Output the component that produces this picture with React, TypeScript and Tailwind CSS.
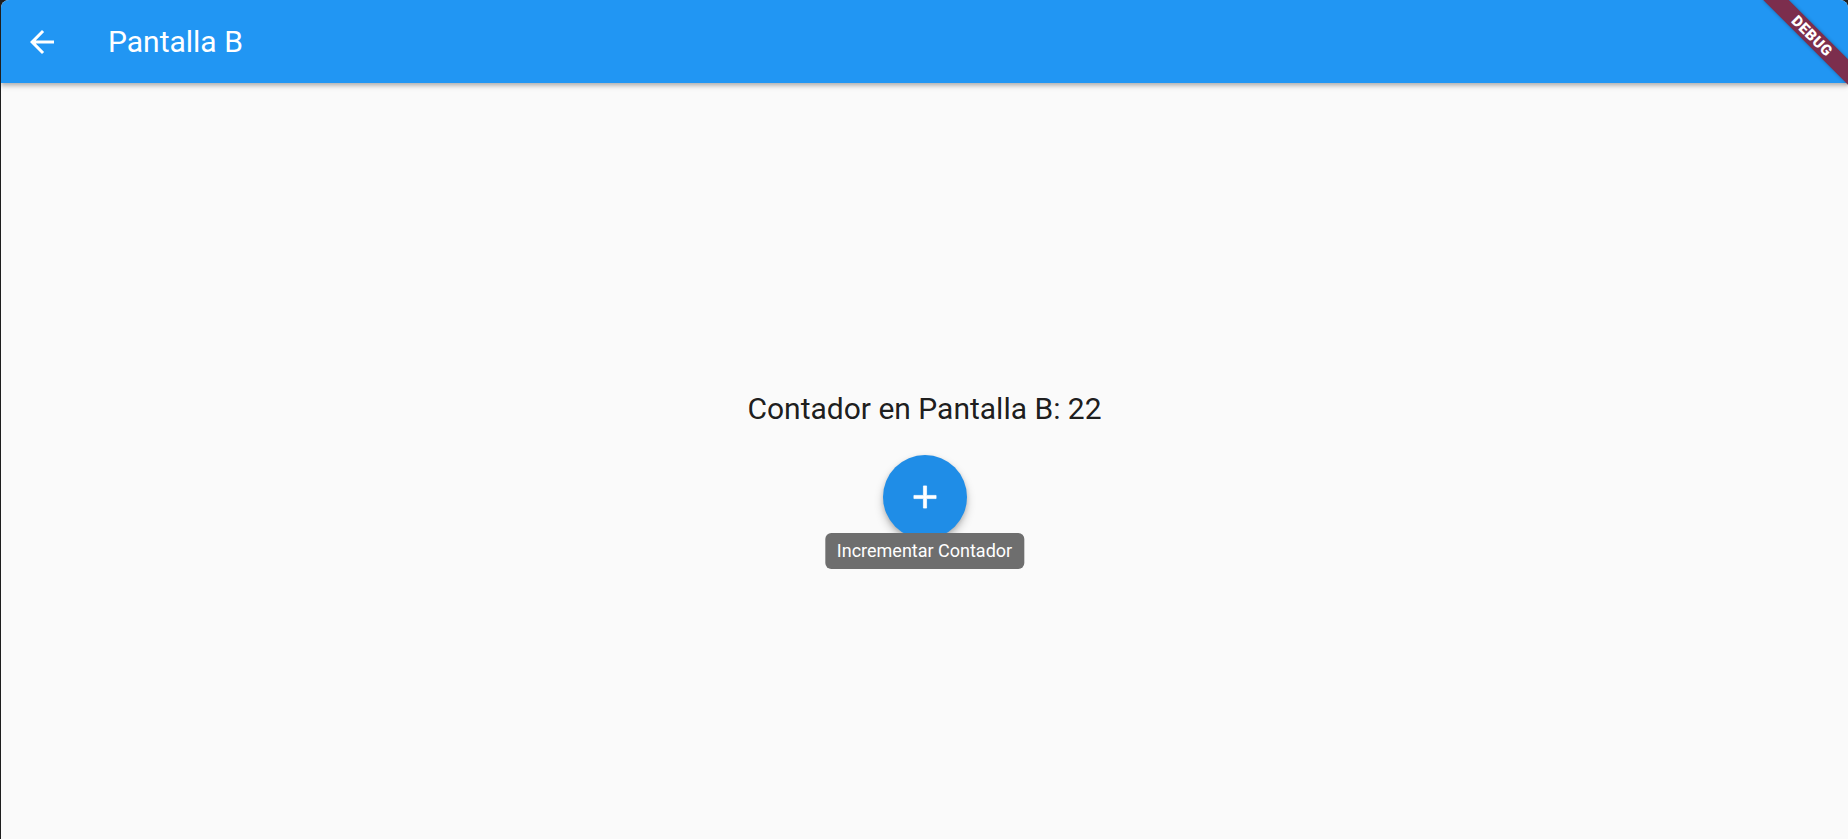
function ArrowBack() {
  return (
    <svg width="36" height="36" viewBox="0 0 24 24" fill="white">
      <path d="M20 11H7.83l5.59-5.59L12 4l-8 8 8 8 1.41-1.41L7.83 13H20v-2z" />
    </svg>
  )
}

function AddIcon() {
  return (
    <svg width="38" height="38" viewBox="0 0 24 24" fill="white" stroke="white" strokeWidth="0.45">
      <path d="M19 13h-6v6h-2v-6H5v-2h6V5h2v6h6v2z" />
    </svg>
  )
}

export default function App() {
  const contador = 22

  return (
    <div className="h-[839px] w-full bg-[#1e1e1e] font-['Roboto',sans-serif]">
      <div className="relative ml-[1px] flex h-full flex-col overflow-hidden rounded-t-[8px] bg-[#fafafa]">
        {/* barra superior */}
        <header className="relative z-10 flex h-[83px] shrink-0 items-center bg-[#2196f3] shadow-[0_2px_4px_rgba(0,0,0,0.2),0_4px_5px_rgba(0,0,0,0.12)]">
          <button className="ml-[23px] flex h-[36px] w-[36px] items-center justify-center">
            <ArrowBack />
          </button>
          <h1 className="ml-[48px] text-[30px] font-normal leading-none text-white">
            Pantalla B
          </h1>
        </header>

        {/* contenido */}
        <main className="flex flex-1 flex-col items-center justify-center pt-[8px]">
          <p className="text-[30px] leading-[35px] text-black/90">
            Contador en Pantalla B: {contador}
          </p>

          <div className="relative mt-[29px]">
            <button className="flex h-[84px] w-[84px] items-center justify-center rounded-full bg-[#1f8de7] shadow-[0_5px_10px_rgba(0,0,0,0.22),0_2px_4px_rgba(0,0,0,0.14)]">
              <AddIcon />
            </button>
            <div className="absolute left-1/2 top-[78px] flex h-[36px] -translate-x-1/2 items-center whitespace-nowrap rounded-[6px] bg-[#6e6e6e] px-[12px] text-[18px] leading-none text-white">
              Incrementar Contador
            </div>
          </div>
        </main>

        {/* banda debug */}
        <div className="absolute right-[-24px] top-[27px] z-20 flex h-[18px] w-[120px] rotate-45 items-center justify-center bg-[#7c2e4d] shadow-[0_0_4px_rgba(0,0,0,0.3)]">
          <span className="text-[15px] font-black leading-none tracking-[0.5px] text-white">
            DEBUG
          </span>
        </div>
      </div>
    </div>
  )
}
